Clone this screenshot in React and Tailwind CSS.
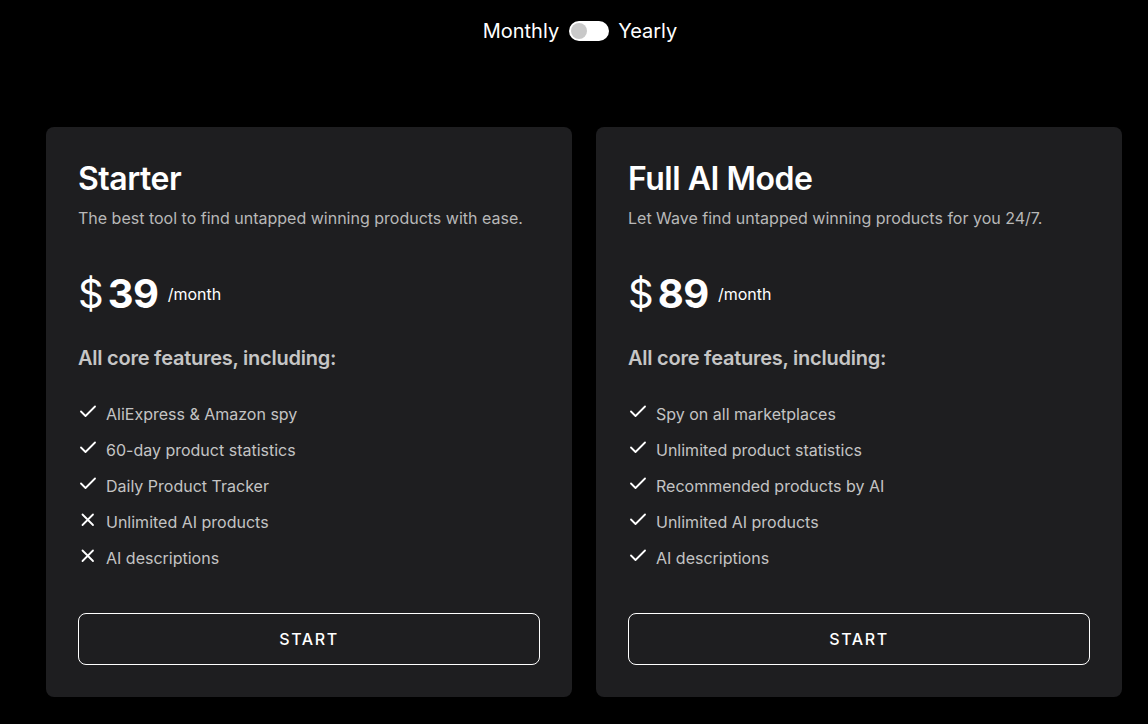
const plans = [
  {
    name: 'Starter',
    desc: 'The best tool to find untapped winning products with ease.',
    price: '39',
    features: [
      ['AliExpress & Amazon spy', true],
      ['60-day product statistics', true],
      ['Daily Product Tracker', true],
      ['Unlimited AI products', false],
      ['AI descriptions', false],
    ],
  },
  {
    name: 'Full AI Mode',
    desc: 'Let Wave find untapped winning products for you 24/7.',
    price: '89',
    features: [
      ['Spy on all marketplaces', true],
      ['Unlimited product statistics', true],
      ['Recommended products by AI', true],
      ['Unlimited AI products', true],
      ['AI descriptions', true],
    ],
  },
]

export default function App() {
  return (
    <div className="min-h-[724px] bg-black text-white font-['Inter',sans-serif]">
      <BillingToggle />
      <div className="grid grid-cols-2 gap-6 pl-[46px] pr-[26px] mt-[82px]">
        {plans.map(p => <PlanCard key={p.name} plan={p} />)}
      </div>
    </div>
  )
}

function BillingToggle() {
  return (
    <div className="flex items-center justify-center gap-[10px] pt-[17px] pl-3 text-[20px] leading-[28px]">
      <span>Monthly</span>
      <div className="w-10 h-5 rounded-full bg-white flex items-center px-[2px]">
        <div className="w-4 h-4 rounded-full bg-[#c9c9c9]" />
      </div>
      <span className="-ml-[1px]">Yearly</span>
    </div>
  )
}

function FeatureIcon({ ok }) {
  return (
    <svg width="16" height="24" viewBox="0 0 16 24" fill="none" stroke="white" strokeWidth="1.8" strokeLinecap="round" strokeLinejoin="round" className="shrink-0">
      {ok
        ? <path d="M1 9.5 5.5 14 15 4.5" />
        : <path d="M2.5 4.5 13 15M13 4.5 2.5 15" />}
    </svg>
  )
}

function PlanCard({ plan }) {
  return (
    <div className="bg-[#1e1e20] rounded-lg px-8 pt-8 pb-8">
      <h2 className="text-[32px] leading-[40px] font-semibold tracking-[-0.015em]">{plan.name}</h2>
      <p className="mt-[7px] text-base leading-6 text-[#b8b8b8]">{plan.desc}</p>

      <div className="mt-10 flex items-center h-12">
        <span className="text-[40px] leading-[48px] font-normal">$</span>
        <span className="text-[40px] leading-[48px] font-bold ml-[4px] tracking-[-0.01em]">{plan.price}</span>
        <span className="text-base ml-[9px] -mt-[1px]">/month</span>
      </div>

      <h3 className="mt-[26px] text-[20px] leading-7 font-semibold tracking-[-0.012em] text-[#c6c6c6]">All core features, including:</h3>

      <ul className="mt-[30px] flex flex-col gap-3">
        {plan.features.map(([label, ok]) => (
          <li key={label} className="flex items-start gap-[10px] pl-[2px] text-base leading-6 text-[#c4c4c4]">
            <FeatureIcon ok={ok} />
            <span>{label}</span>
          </li>
        ))}
      </ul>

      <button className="mt-[43px] w-full h-[52px] rounded-lg border border-white text-base font-medium tracking-[0.1em]">
        START
      </button>
    </div>
  )
}
